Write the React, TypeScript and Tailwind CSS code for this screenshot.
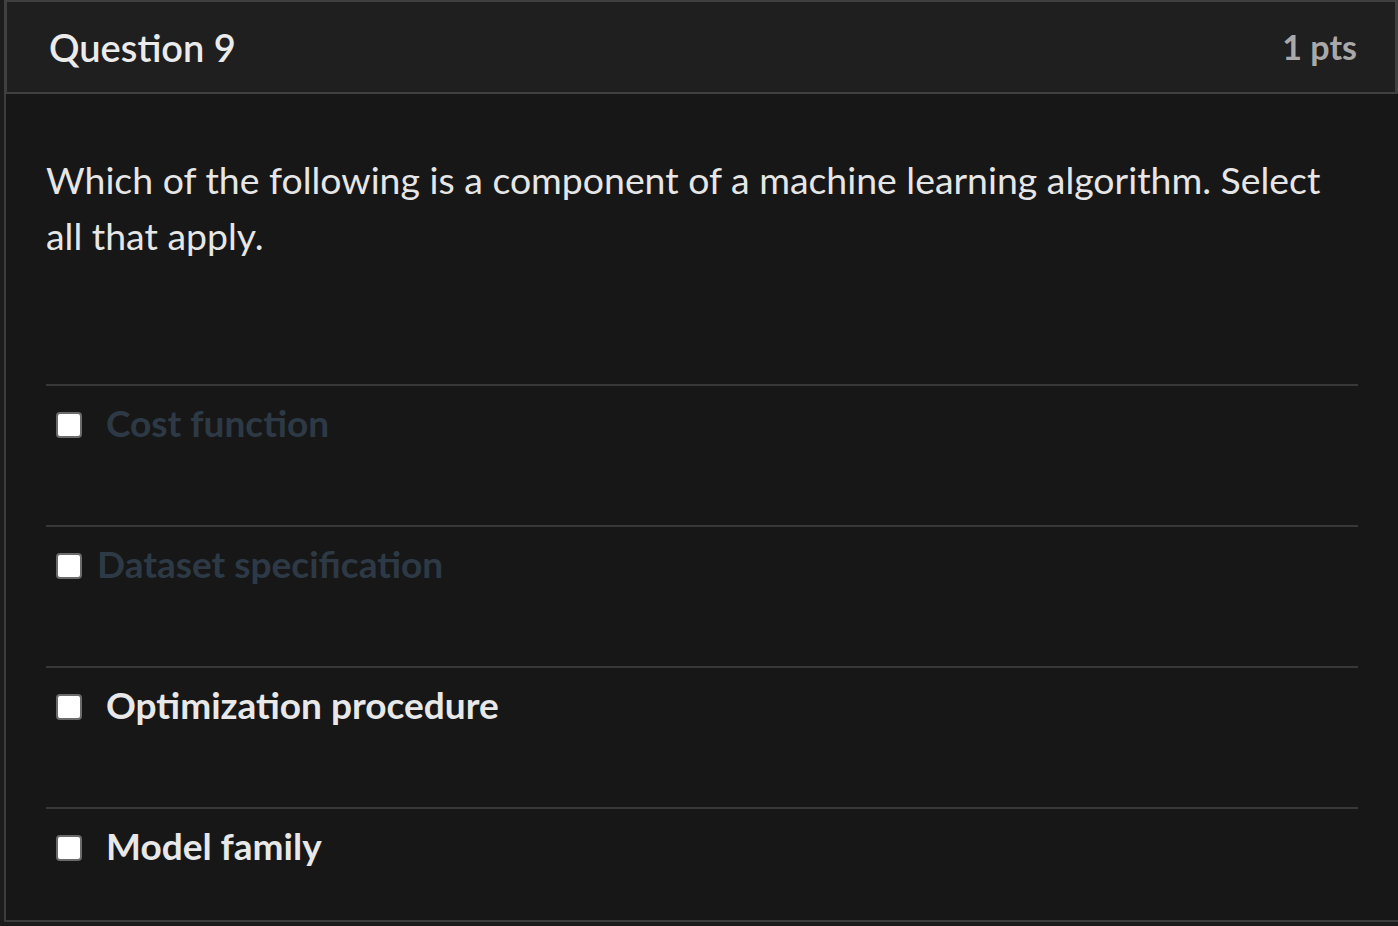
import React from "react";

const options = [
  { label: "Cost function", dim: true, gap: "ml-[24px]", h: "h-[141px]" },
  { label: "Dataset specification", dim: true, gap: "ml-[15px]", h: "h-[141px]" },
  { label: "Optimization procedure", dim: false, gap: "ml-[24px]", h: "h-[141px]" },
  { label: "Model family", dim: false, gap: "ml-[24px]", h: "h-[111px]" },
];

export default function App() {
  return (
    <div
      className="w-[1398px] h-[926px] bg-[#1c1c1c] overflow-hidden"
      style={{ fontFamily: "Lato, 'Noto Sans', sans-serif" }}
    >
      <div className="ml-[4px] w-[1394px] h-[922px] flex flex-col">
        <div className="h-[94px] shrink-0 bg-[#1f1f1f] border-t-[2px] border-l-[3px] border-r-[3px] border-b-[2px] border-[#404040] flex items-center justify-between pl-[42px] pr-[38px]">
          <div className="text-[38px] font-semibold text-[#ebebeb] leading-none">Question 9</div>
          <div className="text-[34px] font-bold text-[#a9a9a9] leading-none">1 pts</div>
        </div>
        <div className="flex-1 min-h-0 bg-[#171717] border-l-[2px] border-b-[2px] border-[#3c3c3c] pl-[40px] pr-[40px] overflow-hidden">
          <p className="mt-[58px] text-[37.4px] leading-[56px] text-[#e6e6e6] pr-[10px]">
            Which of the following is a component of a machine learning algorithm. Select all that apply.
          </p>
          <div className="mt-[120px]">
            {options.map((o) => (
              <div key={o.label} className={`${o.h} border-t-[2px] border-[#383838] flex items-start pt-[16px] pl-[10px]`}>
                <div className="mt-[10px] w-[26px] h-[26px] bg-white rounded-[4px] border-[2px] border-[#6b6b6b] shrink-0" />
                <span
                  className={`${o.gap} text-[37px] font-bold leading-[42px] ${o.dim ? "text-[#2d3a46]" : "text-[#e8e8e8]"}`}
                >
                  {o.label}
                </span>
              </div>
            ))}
          </div>
        </div>
      </div>
    </div>
  );
}
